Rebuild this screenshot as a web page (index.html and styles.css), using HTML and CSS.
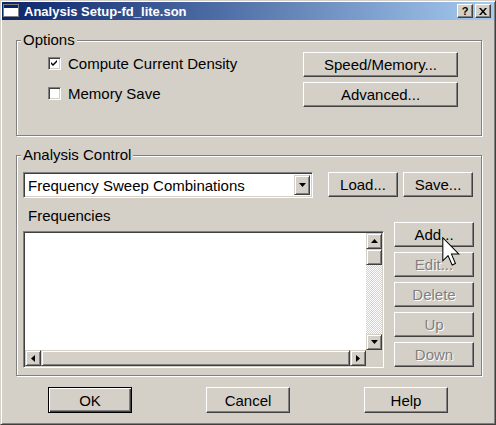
FILE: index.html
```html
<!DOCTYPE html>
<html>
<head>
    <title>Analysis Setup</title>
    <meta charset="UTF-8">
    <link rel="stylesheet" href="styles.css">
</head>
<body>
    <div class="window">
        <div class="titlebar">
            <svg class="app-icon" width="16" height="14" viewBox="0 0 16 14">
                <rect x="0.5" y="0.5" width="15" height="12" fill="#fff" stroke="#808080"/>
                <rect x="1" y="1" width="14" height="3" fill="#0a246a"/>
            </svg>
            <span class="title">Analysis Setup-fd_lite.son</span>
            <div class="caption-btns">
                <button class="cap-btn help">?</button>
                <button class="cap-btn">
                    <svg width="8" height="7" viewBox="0 0 8 7"><path d="M0 0h2l2 2.5 2-2.5h2l-3 3.5 3 3.5h-2l-2-2.5-2 2.5h-2l3-3.5z" fill="#000"/></svg>
                </button>
            </div>
        </div>

        <div class="dialog">
            <fieldset class="group options">
                <legend>Options</legend>
                <div class="options-body">
                    <div class="checks">
                        <label class="check">
                            <span class="box">
                                <svg width="9" height="9" viewBox="0 0 9 9"><path d="M1 3l2 2 4-4v2l-4 4-2-2z" fill="#000"/></svg>
                            </span>
                            Compute Current Density
                        </label>
                        <label class="check"><span class="box"></span>Memory Save</label>
                    </div>
                    <div class="side-btns">
                        <button class="btn wide">Speed/Memory...</button>
                        <button class="btn wide">Advanced...</button>
                    </div>
                </div>
            </fieldset>

            <fieldset class="group analysis">
                <legend>Analysis Control</legend>
                <div class="analysis-body">
                    <div class="combo-row">
                        <div class="combo">
                            <span class="combo-text">Frequency Sweep Combinations</span>
                            <span class="combo-btn">
                                <svg width="7" height="4" viewBox="0 0 7 4"><path d="M0 0h7l-3.5 4z" fill="#000"/></svg>
                            </span>
                        </div>
                        <button class="btn small">Load...</button>
                        <button class="btn small">Save...</button>
                    </div>

                    <div class="freq-area">
                        <div class="freq-left">
                            <div class="freq-label">Frequencies</div>
                            <div class="listbox">
                                <div class="list-body"></div>
                                <div class="vscroll">
                                    <span class="sb-btn">
                                        <svg width="7" height="4" viewBox="0 0 7 4"><path d="M0 4h7l-3.5-4z" fill="#000"/></svg>
                                    </span>
                                    <span class="sb-thumb"></span>
                                    <span class="sb-track"></span>
                                    <span class="sb-btn">
                                        <svg width="7" height="4" viewBox="0 0 7 4"><path d="M0 0h7l-3.5 4z" fill="#000"/></svg>
                                    </span>
                                </div>
                                <div class="hscroll">
                                    <span class="sb-btn">
                                        <svg width="4" height="7" viewBox="0 0 4 7"><path d="M4 0v7l-4-3.5z" fill="#000"/></svg>
                                    </span>
                                    <span class="sb-thumb wide-thumb"></span>
                                    <span class="sb-btn">
                                        <svg width="4" height="7" viewBox="0 0 4 7"><path d="M0 0v7l4-3.5z" fill="#000"/></svg>
                                    </span>
                                </div>
                                <div class="sb-corner"></div>
                            </div>
                        </div>
                        <div class="list-btns">
                            <button class="btn list-btn">Add...</button>
                            <button class="btn list-btn" disabled>Edit...</button>
                            <button class="btn list-btn" disabled>Delete</button>
                            <button class="btn list-btn" disabled>Up</button>
                            <button class="btn list-btn" disabled>Down</button>
                        </div>
                    </div>
                </div>
            </fieldset>

            <div class="footer">
                <button class="btn footer-btn default">OK</button>
                <button class="btn footer-btn">Cancel</button>
                <button class="btn footer-btn">Help</button>
            </div>
        </div>

        <!-- mouse pointer over the Add button -->
        <svg class="cursor" width="18" height="29" viewBox="0 0 12 19.5">
            <path d="M0.5 0.5V16L4 12.5 6.8 18.8 9 17.8 6.3 11.5H11.3Z" fill="#fff" stroke="#000" stroke-width="0.7" stroke-linejoin="miter"/>
        </svg>
    </div>
</body>
</html>
```

FILE: styles.css
```css
* {
    box-sizing: border-box;
}

body {
    margin: 0;
    background: #d4d0c8;
    font-family: "Liberation Sans", Arial, sans-serif;
    font-size: 15px;
    color: #000;
}

.window {
    position: relative;
    width: 496px;
    height: 425px;
    padding: 1px;
    background: #d4d0c8;
    border: 1px solid;
    border-color: #d4d0c8 #404040 #404040 #d4d0c8;
    box-shadow: inset 1px 1px #fff, inset -1px -1px #808080;
}

/* title bar */
.titlebar {
    display: flex;
    align-items: center;
    height: 18px;
    padding: 0 3px 0 1px;
    background: linear-gradient(to right, #0a246a, #a6caf0);
}

.app-icon {
    flex: none;
}

.title {
    margin-left: 5px;
    color: #fff;
    font-weight: bold;
    font-size: 13px;
    white-space: nowrap;
}

.caption-btns {
    display: flex;
    gap: 2px;
    margin-left: auto;
}

.cap-btn {
    display: flex;
    align-items: center;
    justify-content: center;
    width: 16px;
    height: 14px;
    padding: 0;
    background: #d4d0c8;
    border: 1px solid;
    border-color: #fff #404040 #404040 #fff;
    box-shadow: inset -1px -1px #808080;
    font-family: "Liberation Sans", Arial, sans-serif;
    font-weight: bold;
    font-size: 11px;
    line-height: 1;
}

/* dialog body */
.dialog {
    padding: 0 0 0 14px;
}

.group {
    width: 466px;
    margin: 0;
    padding: 0;
    border: 1px solid #808080;
    box-shadow: inset 1px 1px #fff, 1px 1px #fff;
    min-inline-size: 0;
}

.group legend {
    margin-left: 4px;
    padding: 0 2px;
    line-height: 16px;
    background: #d4d0c8;
}

.options {
    margin-top: 12px;
    padding: 4px 0 28px;
}

.options-body {
    display: flex;
    justify-content: space-between;
    padding: 0 23px 0 31px;
}

.checks,
.side-btns {
    display: flex;
    flex-direction: column;
    gap: 5px;
}

.check {
    display: flex;
    align-items: center;
    height: 25px;
    padding-bottom: 2px;
}

.box {
    display: flex;
    align-items: center;
    justify-content: center;
    width: 13px;
    height: 13px;
    margin-right: 7px;
    background: #fff;
    border: 1px solid;
    border-color: #808080 #fff #fff #808080;
    box-shadow: inset 1px 1px #404040, inset -1px -1px #d4d0c8;
}

.btn {
    padding: 0;
    background: #d4d0c8;
    border: 1px solid;
    border-color: #fff #404040 #404040 #fff;
    box-shadow: inset -1px -1px #808080;
    font-family: inherit;
    font-size: 15px;
    color: #000;
    text-align: center;
}

.btn:disabled {
    color: #808080;
    text-shadow: 1px 1px #fff;
}

.wide {
    width: 155px;
    height: 25px;
}

.analysis {
    margin-top: 11px;
    padding: 9px 0 7px;
}

.analysis-body {
    padding-left: 6px;
}

.combo-row {
    display: flex;
    align-items: flex-start;
    gap: 5px;
}

.combo {
    display: flex;
    align-items: center;
    width: 290px;
    height: 26px;
    margin-right: 10px;
    padding: 2px;
    background: #fff;
    border: 1px solid;
    border-color: #808080 #fff #fff #808080;
    box-shadow: inset 1px 1px #404040, inset -1px -1px #d4d0c8;
}

.combo-text {
    flex: 1;
    padding-left: 2px;
    white-space: nowrap;
}

.combo-btn {
    display: flex;
    align-items: center;
    justify-content: center;
    width: 16px;
    height: 100%;
    background: #d4d0c8;
    border: 1px solid;
    border-color: #d4d0c8 #404040 #404040 #d4d0c8;
    box-shadow: inset 1px 1px #fff, inset -1px -1px #808080;
}

.small {
    width: 70px;
    height: 25px;
}

.freq-area {
    display: flex;
    gap: 10px;
}

.freq-label {
    margin-top: 10px;
    padding-left: 5px;
    line-height: 16px;
}

.listbox {
    display: grid;
    grid-template-columns: 1fr 16px;
    grid-template-rows: 1fr 16px;
    width: 361px;
    height: 137px;
    margin-top: 7px;
    padding: 1px;
    background: #fff;
    border: 1px solid;
    border-color: #808080 #fff #fff #808080;
    box-shadow: inset 1px 1px #404040, inset -1px -1px #d4d0c8;
}

.vscroll {
    display: flex;
    flex-direction: column;
}

.hscroll {
    display: flex;
}

.sb-btn,
.sb-thumb {
    display: flex;
    align-items: center;
    justify-content: center;
    flex: none;
    width: 16px;
    height: 16px;
    background: #d4d0c8;
    border: 1px solid;
    border-color: #d4d0c8 #404040 #404040 #d4d0c8;
    box-shadow: inset 1px 1px #fff, inset -1px -1px #808080;
}

.wide-thumb {
    flex: 1;
}

.sb-track {
    flex: 1;
    background-color: #d4d0c8;
    background-image: conic-gradient(#fff 25%, #d4d0c8 0 50%, #fff 0 75%, #d4d0c8 0);
    background-size: 2px 2px;
}

.sb-corner {
    background: #d4d0c8;
}

.list-btns {
    display: flex;
    flex-direction: column;
    gap: 5px;
    padding-top: 24px;
}

.list-btn {
    width: 80px;
    height: 25px;
}

.footer {
    display: flex;
    justify-content: space-between;
    margin-top: 11px;
    padding: 0 46px 0 32px;
}

.footer-btn {
    width: 84px;
    height: 26px;
}

.default {
    border: 1px solid #000;
    box-shadow: inset 1px 1px #fff, inset -1px -1px #404040, inset -2px -2px #808080;
}

.cursor {
    position: absolute;
    left: 441px;
    top: 236px;
}
```
